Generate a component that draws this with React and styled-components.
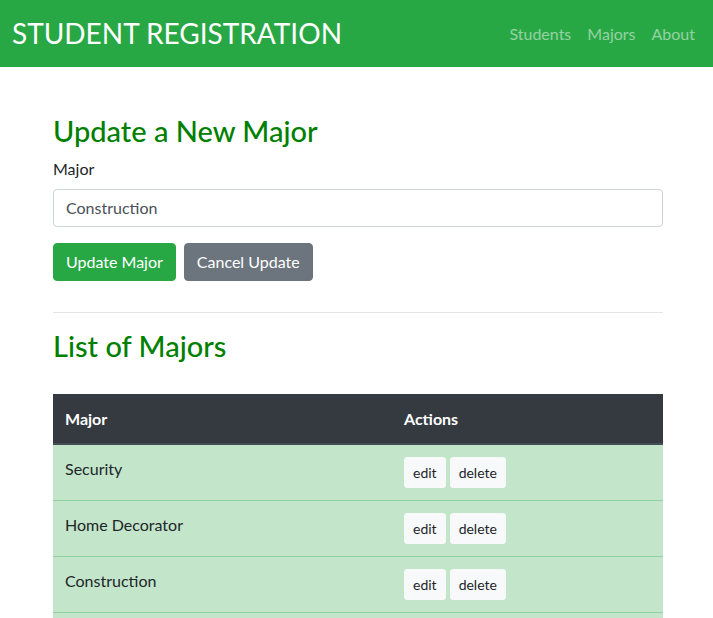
import React from "react";
import styled, { createGlobalStyle } from "styled-components";

const Global = createGlobalStyle`
  * { box-sizing: border-box; }
  body {
    margin: 0;
    font-family: "Segoe UI", Lato, "Noto Sans", sans-serif;
    font-size: 16px;
    line-height: 1.5;
    color: #212529;
    background: #fff;
  }
`;

const Navbar = styled.nav`
  height: 67px;
  background: #28a745;
  display: flex;
  align-items: center;
  justify-content: space-between;
  padding: 0 10px 0 12px;
`;

const Brand = styled.div`
  color: #fff;
  font-size: 28px;
  line-height: 1.2;
  white-space: nowrap;
`;

const NavLinks = styled.div`
  display: flex;
  align-items: center;
`;

const NavLink = styled.a`
  color: rgba(255, 255, 255, 0.5);
  padding: 8px;
  font-size: 16px;
  text-decoration: none;
`;

const Container = styled.main`
  width: 610px;
  margin: 47px auto 0 53px;
`;

const Heading = styled.h3`
  margin: 0 0 8px;
  font-size: 29px;
  font-weight: 500;
  line-height: 1.2;
  color: #008000;
`;

const Label = styled.label`
  display: block;
  margin-bottom: 8px;
`;

const Input = styled.input`
  display: block;
  width: 100%;
  height: 38px;
  padding: 6px 12px;
  font: inherit;
  color: #495057;
  border: 1px solid #ced4da;
  border-radius: 4px;
  margin-bottom: 16px;
`;

const ButtonRow = styled.div`
  display: flex;
  gap: 8px;
`;

const Button = styled.button`
  font: inherit;
  height: 38px;
  padding: 6px 12px;
  border: 1px solid ${(p) => p.$bg};
  border-radius: 4px;
  background: ${(p) => p.$bg};
  color: #fff;
`;

const Rule = styled.hr`
  border: 0;
  border-top: 1px solid rgba(0, 0, 0, 0.1);
  margin: 31px 0 16px;
`;

const Table = styled.table`
  width: 100%;
  border-collapse: collapse;
  margin-top: 30px;
`;

const Th = styled.th`
  background: #343a40;
  color: #fff;
  text-align: left;
  padding: 13px 12px 12px;
  font-weight: 700;
  border-bottom: 2px solid #454d55;
  vertical-align: bottom;
  width: ${(p) => p.$w || "auto"};
`;

const Td = styled.td`
  background: #c3e6cb;
  padding: 12px;
  border-top: 1px solid #8fd19e;
  vertical-align: top;
`;

const SmallButton = styled.button`
  font: inherit;
  font-size: 14px;
  line-height: 1.5;
  padding: 4px 8px;
  margin-right: 4px;
  background: #f8f9fa;
  border: 1px solid #f8f9fa;
  border-radius: 3px;
  color: #212529;
`;

const majors = ["Security", "Home Decorator", "Construction", "Nursing"];

export default function App() {
  return (
    <>
      <Global />
      <Navbar>
        <Brand>STUDENT REGISTRATION</Brand>
        <NavLinks>
          <NavLink>Students</NavLink>
          <NavLink>Majors</NavLink>
          <NavLink>About</NavLink>
        </NavLinks>
      </Navbar>
      <Container>
        <Heading>Update a New Major</Heading>
        <Label>Major</Label>
        <Input defaultValue="Construction" />
        <ButtonRow>
          <Button $bg="#28a745">Update Major</Button>
          <Button $bg="#6c757d">Cancel Update</Button>
        </ButtonRow>
        <Rule />
        <Heading>List of Majors</Heading>
        <Table>
          <thead>
            <tr>
              <Th $w="339px">Major</Th>
              <Th>Actions</Th>
            </tr>
          </thead>
          <tbody>
            {majors.map((m) => (
              <tr key={m}>
                <Td>{m}</Td>
                <Td>
                  <SmallButton>edit</SmallButton>
                  <SmallButton>delete</SmallButton>
                </Td>
              </tr>
            ))}
          </tbody>
        </Table>
      </Container>
    </>
  );
}
